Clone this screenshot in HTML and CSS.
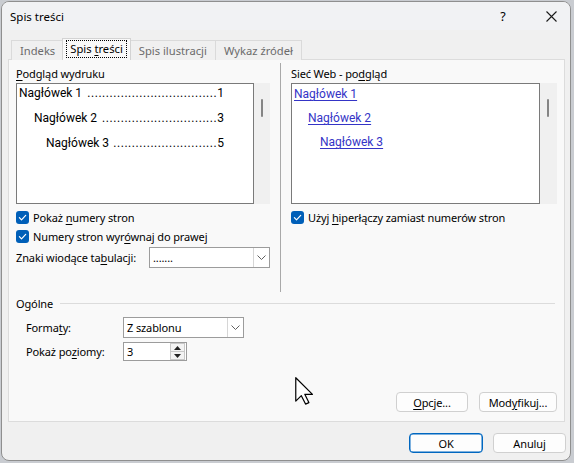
FILE: index.html
```html
<!DOCTYPE html>
<html lang="pl">
<head>
<meta charset="utf-8">
<title>Spis treści</title>
<link rel="stylesheet" href="styles.css">
</head>
<body>
<div class="window">
  <div class="titlebar">
    <span class="title">Spis treści</span>
    <span class="help">?</span>
    <span class="close"><svg width="11" height="11" viewBox="0 0 11 11"><path d="M0.5 0.5 L10.5 10.5 M10.5 0.5 L0.5 10.5" stroke="#1a1a1a" stroke-width="1.1" fill="none"/></svg></span>
  </div>
  <div class="tabs">
    <div class="tab">Indeks</div>
    <div class="tab selected"><span class="focus">Spis <u>t</u>reści</span></div>
    <div class="tab">Spis ilustracji</div>
    <div class="tab">Wykaz źródeł</div>
  </div>
  <div class="panel">
    <div class="columns">
      <div class="col col-left">
        <div class="label"><u>P</u>odgląd wydruku</div>
        <div class="preview">
          <div class="box print">
            <div class="toc l1"><span>Nagłówek 1</span><span class="dots">...................................</span><span>1</span></div>
            <div class="toc l2"><span>Nagłówek 2</span><span class="dots">...............................</span><span>3</span></div>
            <div class="toc l3"><span>Nagłówek 3</span><span class="dots">............................</span><span>5</span></div>
          </div>
          <div class="scroll"><div class="thumb"></div></div>
        </div>
        <div class="check first"><span class="cb"><svg width="13" height="13" viewBox="0 0 13 13"><path d="M3.4 6.7 L5.5 8.8 L9.7 4.4" stroke="#fff" stroke-width="1.2" fill="none" stroke-linecap="round" stroke-linejoin="round"/></svg></span><span>Pokaż <u>n</u>umery stron</span></div>
        <div class="check"><span class="cb"><svg width="13" height="13" viewBox="0 0 13 13"><path d="M3.4 6.7 L5.5 8.8 L9.7 4.4" stroke="#fff" stroke-width="1.2" fill="none" stroke-linecap="round" stroke-linejoin="round"/></svg></span><span>Numery stron wyr<u>ó</u>wnaj do prawej</span></div>
        <div class="leader-row">
          <span>Znaki wiodące ta<u>b</u>ulacji:</span>
          <div class="combo leader-combo"><span class="combo-text">.......</span><span class="combo-arrow"><svg width="9" height="5" viewBox="0 0 9 5"><path d="M0.5 0.5 L4.5 4.5 L8.5 0.5" stroke="#606060" stroke-width="1" fill="none"/></svg></span></div>
        </div>
      </div>
      <div class="vsep"></div>
      <div class="col col-right">
        <div class="label">Sieć Web - po<u>d</u>gląd</div>
        <div class="preview">
          <div class="box web">
            <div class="link l1">Nagłówek 1</div>
            <div class="link l2">Nagłówek 2</div>
            <div class="link l3">Nagłówek 3</div>
          </div>
          <div class="scroll"><div class="thumb"></div></div>
        </div>
        <div class="check first"><span class="cb"><svg width="13" height="13" viewBox="0 0 13 13"><path d="M3.4 6.7 L5.5 8.8 L9.7 4.4" stroke="#fff" stroke-width="1.2" fill="none" stroke-linecap="round" stroke-linejoin="round"/></svg></span><span>Użyj <u>h</u>iperłączy zamiast numerów stron</span></div>
      </div>
    </div>
    <div class="group-head"><span>Ogólne</span><div class="hline"></div></div>
    <div class="form-row first">
      <span class="form-label">Forma<u>t</u>y:</span>
      <div class="combo format-combo"><span class="combo-text">Z szablonu</span><span class="combo-arrow"><svg width="9" height="5" viewBox="0 0 9 5"><path d="M0.5 0.5 L4.5 4.5 L8.5 0.5" stroke="#606060" stroke-width="1" fill="none"/></svg></span></div>
    </div>
    <div class="form-row second">
      <span class="form-label">Pokaż po<u>z</u>iomy:</span>
      <div class="spin"><span class="spin-text">3</span><span class="spin-btns"><span class="spin-btn"><svg width="7" height="4" viewBox="0 0 7 4"><path d="M0 4 L3.5 0 L7 4 Z" fill="#222"/></svg></span><span class="spin-btn"><svg width="7" height="4" viewBox="0 0 7 4"><path d="M0 0 L3.5 4 L7 0 Z" fill="#222"/></svg></span></span></div>
    </div>
    <div class="panel-buttons">
      <div class="btn opcje"><u>O</u>pcje...</div>
      <div class="btn modyfikuj">Mod<u>y</u>fikuj...</div>
    </div>
  </div>
  <div class="footer">
    <div class="btn ok">OK</div>
    <div class="btn anuluj">Anuluj</div>
  </div>
  <svg class="cursor" width="19" height="28" viewBox="0 0 12.6 18.6"><path d="M0.5 0.5 L0.5 16 L4.2 12.4 L7 18 L9.2 17 L6.5 11.5 L11.6 11.5 Z" fill="#fff" stroke="#000" stroke-width="0.8" stroke-linejoin="round"/></svg>
</div>
</body>
</html>
```
FILE: styles.css
```css
* { box-sizing: border-box; }
html, body { margin: 0; padding: 0; }
body {
  width: 574px;
  height: 463px;
  overflow: hidden;
  background: #c9ccd1;
  font-family: "Noto Sans", sans-serif;
  font-size: 11px;
  letter-spacing: -0.12px;
  color: #000;
}
u { text-decoration: underline; text-underline-offset: 2px; text-decoration-thickness: 1px; }

.window {
  position: relative;
  margin: 1px 0 0 1px;
  width: 570px;
  height: 460px;
  border: 1px solid #8f8f8f;
  border-radius: 8px;
  background: #f0f0f0;
  overflow: hidden;
  display: flex;
  flex-direction: column;
}

.titlebar {
  height: 28px;
  display: flex;
  align-items: center;
  padding-left: 8px;
  background: #f1f2f4;
}
.title { font-size: 11.5px; letter-spacing: 0; }
.help { margin-left: auto; width: 10px; text-align: center; font-size: 12.5px; margin-right: 38px; }
.close { width: 11px; height: 11px; display: flex; margin-right: 13px; }

.tabs {
  margin-top: 9px;
  height: 21px;
  display: flex;
  align-items: flex-end;
  padding-left: 9px;
  position: relative;
  z-index: 1;
}
.tab {
  height: 20px;
  padding: 0 8px;
  display: flex;
  align-items: center;
  color: #6b6b6b;
  border: 1px solid #dadada;
  border-bottom: none;
  background: #f0f0f0;
  margin-right: -1px;
  font-size: 11.2px;
  letter-spacing: 0;
}
.tab.selected {
  height: 22px;
  color: #000;
  background: #f9f9f9;
  border-color: #d3d3d3;
  padding: 0 4px;
  margin: 0 -1px 0 -1px;
  align-items: flex-start;
  padding-top: 2px;
  position: relative;
  z-index: 2;
}
.focus {
  outline: 1px dotted #000;
  padding: 0 3px;
  line-height: 16px;
}

.panel {
  margin-left: 6px;
  width: 557px;
  height: 363px;
  border: 1px solid #dcdcdc;
  background: #f9f9f9;
  padding: 3px 7px 0 7px;
  margin-top: -1px;
  display: flex;
  flex-direction: column;
}

.columns { display: flex; height: 229px; }
.col { display: flex; flex-direction: column; }
.col-left { width: 254px; }
.col-right { flex: 1; }
.vsep { width: 1px; background: #a9a9a9; margin: 0 10px; }

.label { height: 20px; line-height: 20px; padding-top: 1px; }

.preview { display: flex; height: 121px; }
.box {
  background: #fff;
  border: 1px solid #7a7a7a;
  font-family: Roboto, sans-serif;
  font-size: 12px;
  letter-spacing: 0;
  display: flex;
  flex-direction: column;
  gap: 9px;
  padding-top: 1px;
}
.print { width: 238px; padding-left: 2px; padding-right: 29px; }
.web { width: 249px; padding-left: 2px; padding-top: 2px; gap: 8px; }
.scroll { flex: 1; background: #f0f0f0; position: relative; }
.thumb { position: absolute; left: 7px; top: 16px; width: 2px; height: 18px; background: #858585; border-radius: 1px; }

.toc { display: flex; line-height: 16px; white-space: nowrap; }
.toc.l2 { margin-left: 15px; }
.toc.l3 { margin-left: 27px; }
.dots { flex: 1; text-align: right; letter-spacing: 0.55px; }

.link { line-height: 16px; color: #3434c6; text-decoration: underline; text-underline-offset: 2px; align-self: flex-start; }
.link.l2 { margin-left: 14px; }
.link.l3 { margin-left: 26px; }

.check { display: flex; align-items: center; height: 19px; gap: 4px; }
.check.first { margin-top: 4px; }
.cb { width: 13px; height: 13px; border-radius: 3px; background: #005fb8; display: flex; }

.leader-row { display: flex; align-items: center; justify-content: space-between; margin-top: 1px; }

.combo {
  height: 21px;
  width: 121px;
  background: #fff;
  border: 1px solid #9c9c9c;
  display: flex;
  align-items: center;
}
.combo-text { flex: 1; padding-left: 3px; }
.combo-arrow { width: 16px; height: 100%; border-left: 1px solid #d6d6d6; display: flex; align-items: center; justify-content: center; }

.group-head { display: flex; align-items: center; height: 16px; margin-top: 3px; }
.hline { flex: 1; height: 1px; background: #dcdcdc; margin-left: 7px; margin-right: 2px; }

.form-row { display: flex; align-items: center; padding-left: 10px; }
.form-row.first { margin-top: 6px; }
.form-row.second { margin-top: 4px; }
.form-label { width: 97px; }

.spin {
  width: 64px;
  height: 19px;
  background: #fff;
  border: 1px solid #9c9c9c;
  display: flex;
  align-items: center;
}
.spin-text { flex: 1; padding-left: 3px; }
.spin-btns { width: 15px; height: 17px; display: flex; flex-direction: column; margin-right: 1px; }
.spin-btn { flex: 1; border: 1px solid #c8c8c8; background: #f3f3f3; display: flex; align-items: center; justify-content: center; }
.spin-btn + .spin-btn { border-top: none; }

.btn {
  height: 20px;
  display: flex;
  align-items: center;
  justify-content: center;
  background: #fdfdfd;
  border: 1px solid #d0d0d0;
  border-radius: 4px;
}
.panel-buttons { display: flex; justify-content: flex-end; gap: 11px; margin-top: 31px; }
.opcje { width: 72px; }
.modyfikuj { width: 78px; }

.footer { display: flex; justify-content: flex-end; gap: 10px; padding-top: 11px; padding-right: 4px; }
.ok { width: 74px; border: 1px solid #0067c0; box-shadow: inset 0 0 0 0.5px #0067c0; }
.anuluj { width: 73px; }

.cursor { position: absolute; left: 293px; top: 375px; }
```
